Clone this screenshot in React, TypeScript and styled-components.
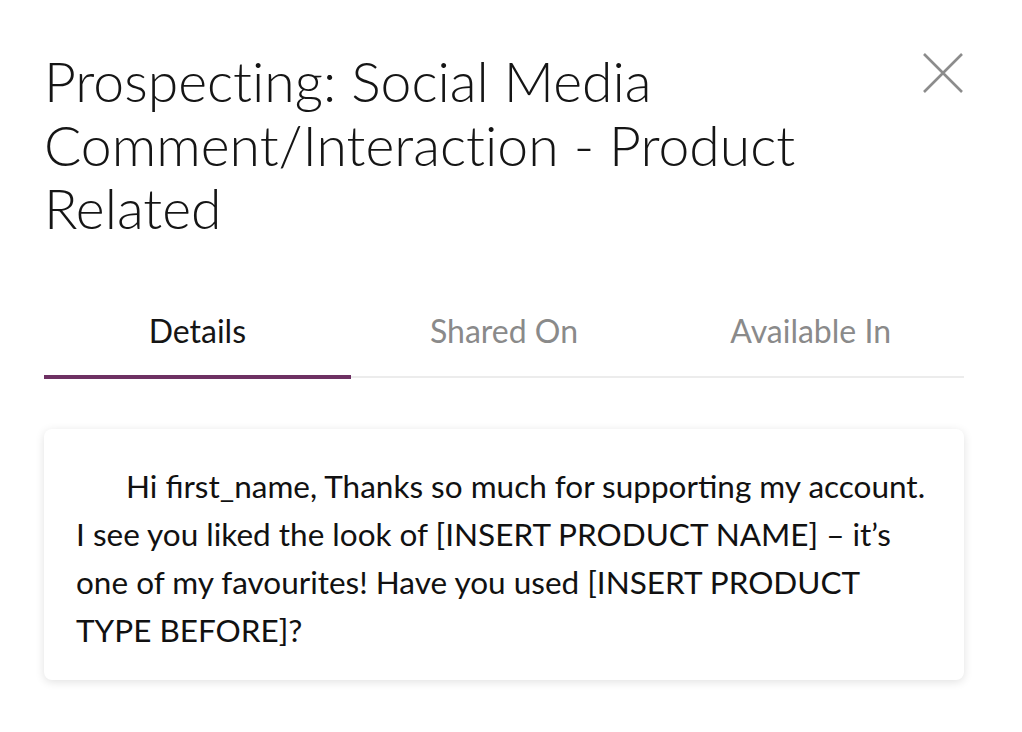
import React, { useState } from 'react';
import styled, { createGlobalStyle } from 'styled-components';

const GlobalStyle = createGlobalStyle`
  html, body {
    margin: 0;
    padding: 0;
    background: #ffffff;
    font-family: Lato, "Open Sans", sans-serif;
    color: #111111;
  }
`;

const Modal = styled.div`
  width: 920px;
  padding: 49px 58px 40px 44px;
`;

const Header = styled.div`
  display: flex;
  align-items: flex-start;
  justify-content: space-between;
`;

const Title = styled.h1`
  margin: 0;
  font-size: 55.3px;
  font-weight: 300;
  line-height: 63.5px;
  color: #151515;
  width: 820px;
  font-variant-ligatures: no-common-ligatures;
`;

const CloseButton = styled.button`
  border: none;
  background: none;
  padding: 0;
  margin: 3px 0 0 0;
  cursor: pointer;
  display: flex;
`;

const Tabs = styled.div`
  display: grid;
  grid-template-columns: repeat(3, 1fr);
  margin-top: 68px;
  border-bottom: 2px solid #ececec;
`;

const Tab = styled.button<{ $active?: boolean }>`
  border: none;
  background: none;
  font-family: inherit;
  font-size: 32px;
  padding: 3px 0 25px;
  margin-bottom: -3px;
  color: ${({ $active }) => ($active ? '#151515' : '#8a8a8a')};
  border-bottom: 4px solid ${({ $active }) => ($active ? '#6e3163' : 'transparent')};
  cursor: pointer;
`;

const Card = styled.div`
  margin-top: 51px;
  background: #fff;
  border-radius: 8px;
  box-shadow: 0 2px 10px rgba(0, 0, 0, 0.12);
  padding: 33px 32px 26px;
`;

const Message = styled.p`
  margin: 0;
  font-size: 31.5px;
  line-height: 48px;
  text-indent: 50px;
  color: #111;
`;

const tabs = ['Details', 'Shared On', 'Available In'];

export default function App() {
  const [active, setActive] = useState(0);
  return (
    <>
      <GlobalStyle />
      <Modal>
        <Header>
          <Title>Prospecting: Social Media Comment/Interaction - Product Related</Title>
          <CloseButton aria-label="Close">
            <svg width="42" height="42" viewBox="0 0 42 42">
              <path d="M2 2 L40 40 M40 2 L2 40" stroke="#8c8c8c" strokeWidth="2.6" />
            </svg>
          </CloseButton>
        </Header>
        <Tabs>
          {tabs.map((t, i) => (
            <Tab key={t} $active={i === active} onClick={() => setActive(i)}>
              {t}
            </Tab>
          ))}
        </Tabs>
        <Card>
          <Message>
            Hi first_name, Thanks so much for supporting my account. I see you liked the look of
            [INSERT PRODUCT NAME] – it’s one of my favourites! Have you used [INSERT PRODUCT TYPE
            BEFORE]?
          </Message>
        </Card>
      </Modal>
    </>
  );
}
